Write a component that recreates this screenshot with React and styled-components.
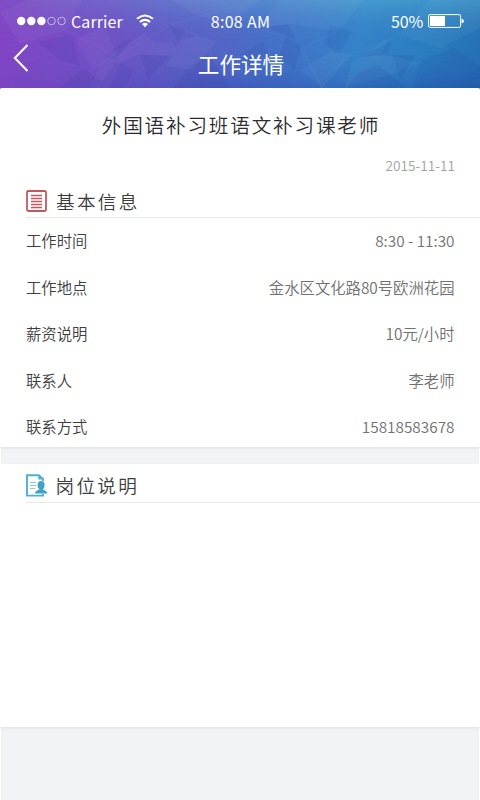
import React from 'react';
import styled, {createGlobalStyle} from 'styled-components'

const GlobalStyle = createGlobalStyle`
  * {
    box-sizing: border-box;
  }
  body {
    margin: 0;
    background: #fff;
    font-family: "Noto Sans CJK SC", "Noto Sans", sans-serif;
    font-weight: 350;
  }
`

const Page = styled.div`
  width: 480px;
  height: 800px;
  display: flex;
  flex-direction: column;
  overflow: hidden;
  background: linear-gradient(90deg, #7a45bd, #226eb5);
`

const Header = styled.header`
  position: relative;
  height: 88px;
  flex-shrink: 0;
  color: #fff;
  background: linear-gradient(97deg, #8244c4 0%, #7350c6 22%, #5a61c6 42%, #4670c8 56%, #3583c9 74%, #2a7ec0 88%, #2470b5 100%);
`

const Facets = styled.svg`
  position: absolute;
  top: 0;
  left: 0;
`

const StatusBar = styled.div`
  position: relative;
  height: 40px;
  padding: 1px 16px 0 17px;
  display: grid;
  grid-template-columns: 1fr auto 1fr;
  align-items: center;
  font-size: 16px;
  line-height: 24px;
  font-weight: 400;
`

const StatusGroup = styled.div`
  display: flex;
  align-items: center;
  justify-content: ${props => props.$end ? 'flex-end' : 'flex-start'};
`

const Carrier = styled.span`
  margin: 0 13px 0 5px;
  letter-spacing: 0.1px;
`

const Clock = styled.span`
  letter-spacing: 0.3px;
`

const Percent = styled.span`
  margin-right: 5px;
  letter-spacing: -0.2px;
`

const TitleBar = styled.div`
  position: relative;
  height: 48px;
  display: grid;
  grid-template-columns: 49px 1fr 47px;
  align-items: center;
`

const BackButton = styled.button`
  width: 40px;
  height: 40px;
  margin-top: -12px;
  padding: 0 0 0 12px;
  border: 0;
  background: none;
  color: #fff;
  display: flex;
  align-items: center;
`

const PageTitle = styled.h1`
  margin: 0;
  font-size: 21.6px;
  line-height: 48px;
  font-weight: 400;
  text-align: center;
`

const Body = styled.main`
  flex: 1;
  border: solid #fff;
  border-width: 0 1px;
  border-radius: 3px 3px 0 0;
  background: #f2f3f6;
`

const Card = styled.section`
  height: ${props => props.$height}px;
  margin: 0 -1px ${props => props.$gap || 0}px;
  border-radius: ${props => props.$rounded ? '2px 2px 0 0' : '0'};
  background: #fff;
  box-shadow: 0 1px 3px rgba(60, 60, 70, 0.1);
  overflow: hidden;
`

const JobName = styled.h2`
  margin: 21px 0 0;
  padding-left: 2px;
  font-size: 19.6px;
  line-height: 32px;
  font-weight: 350;
  letter-spacing: 1.82px;
  text-align: center;
  color: #2c2c2c;
`

const PostDate = styled.div`
  margin-top: 13px;
  padding-right: 25px;
  font-size: 13.7px;
  line-height: 22px;
  text-align: right;
  color: #a2a2a2;
`

const SectionHeader = styled.div`
  height: ${props => props.$height}px;
  margin-left: 26px;
  padding-top: ${props => props.$top}px;
  display: flex;
  align-items: flex-start;
  border-bottom: 1px solid #e8e8ea;
`

const SectionTitle = styled.h3`
  margin: 0 0 0 ${props => props.$gap}px;
  font-size: 18.6px;
  line-height: 22px;
  font-weight: 350;
  letter-spacing: 2.3px;
  color: #3c3c3c;
`

const InfoList = styled.dl`
  margin: 0;
  padding: 0.4px 25.5px 0 26px;
`

const InfoRow = styled.div`
  height: 46.4px;
  display: flex;
  justify-content: space-between;
  font-size: 15.35px;
  line-height: 45px;
`

const Label = styled.dt`
  color: #3e3e3e;
`

const Value = styled.dd`
  margin: 0;
  color: #707070;
`

const info = [
    {label: '工作时间', value: '8:30 - 11:30'},
    {label: '工作地点', value: '金水区文化路80号欧洲花园'},
    {label: '薪资说明', value: '10元/小时'},
    {label: '联系人', value: '李老师'},
    {label: '联系方式', value: '15818583678'},
]

function HeaderFacets() {
    return (
        <Facets width="480" height="88" viewBox="0 0 480 88">
            <defs>
                <linearGradient id="shade" x1="0" y1="0" x2="0" y2="1">
                    <stop offset="0" stopColor="#6cc8e0" stopOpacity=".32"/>
                    <stop offset=".5" stopColor="#4080c8" stopOpacity="0"/>
                    <stop offset="1" stopColor="#2030a0" stopOpacity=".26"/>
                </linearGradient>
                <linearGradient id="fade" x1="0" y1="0" x2="1" y2="0">
                    <stop offset="0" stopColor="#fff" stopOpacity=".2"/>
                    <stop offset=".5" stopColor="#fff"/>
                </linearGradient>
                <mask id="across">
                    <rect width="480" height="88" fill="url(#fade)"/>
                </mask>
            </defs>
            <rect width="480" height="88" fill="url(#shade)" mask="url(#across)"/>
            <g fill="#fff" opacity=".035">
                <path d="M0 12L28 0H82L66 30L20 44Z"/>
                <path d="M76 40L104 26L118 57L92 69Z"/>
                <path d="M112 58L144 34L160 46L120 62Z"/>
                <path d="M144 42H172L182 55H136Z"/>
                <path d="M90 88L104 56L120 62L110 88Z"/>
                <path d="M172 0H260L232 22L198 16Z"/>
                <path d="M186 30L216 42L192 70L166 66Z"/>
                <path d="M256 28L280 0H364L338 31L290 24Z"/>
                <path d="M345 88L352 62L388 38L382 54L420 63L392 74Z"/>
                <path d="M300 70L322 88L352 54L330 52Z"/>
                <path d="M400 35L430 0H480V28L440 48Z"/>
            </g>
            <g fill="#20318f" opacity=".09">
                <path d="M38 42L72 35L80 66L60 60Z"/>
                <path d="M82 69L104 82L96 88H60Z"/>
                <path d="M140 54L168 57L148 79Z"/>
                <path d="M140 54L168 57L148 79Z"/>
                <path d="M104 57L120 43L132 39L117 59Z"/>
                <path d="M116 62L134 70L125 88H98Z"/>
                <path d="M168 24L196 36L178 41Z"/>
                <path d="M186 70L208 54L230 88H174Z"/>
                <path d="M240 54L263 42L268 54L248 66Z"/>
                <path d="M268 27L288 24L296 40Z"/>
                <path d="M330 25L352 31L340 53L324 45Z"/>
                <path d="M359 57L392 41L387 55Z"/>
                <path d="M392 55L416 55L400 79Z"/>
                <path d="M392 55L416 55L400 79Z"/>
                <path d="M422 60L454 48L480 66V88H412Z"/>
                <path d="M288 32L302 48L294 70L278 57Z"/>
                <path d="M360 72L378 65L406 88H346Z"/>
            </g>
            <g stroke="#a8d5f5" strokeWidth="1" opacity=".06" fill="none">
                <path d="M66 30L118 57L172 24L260 0M88 72L144 34"/>
                <path d="M256 28L296 40L318 82L352 54L400 35L430 0M338 31L302 48L322 88"/>
            </g>
        </Facets>
    );
}

function SignalDots() {
    return (
        <svg width="49" height="10" viewBox="0 0 49 10">
            <g fill="#fff">
                <circle cx="4.2" cy="5" r="4.2"/>
                <circle cx="14.3" cy="5" r="4.2"/>
                <circle cx="24.4" cy="5" r="4.2"/>
            </g>
            <g fill="none" stroke="#fff" strokeWidth=".8" opacity=".7">
                <circle cx="34.5" cy="5" r="3.8"/>
                <circle cx="44.6" cy="5" r="3.8"/>
            </g>
        </svg>
    );
}

function WifiIcon() {
    return (
        <svg width="18" height="14" viewBox="0 0 18 14">
            <g fill="none" stroke="#fff" strokeWidth="2.1">
                <path d="M1 4.8Q9 -1.8 17 4.8"/>
                <path d="M3.9 8Q9 3.6 14.1 8"/>
            </g>
            <path d="M6 10.1Q9 7.4 12 10.1L9 13.3Z" fill="#fff"/>
        </svg>
    );
}

function BatteryIcon() {
    return (
        <svg width="36" height="14" viewBox="0 0 36 14">
            <rect x=".6" y=".6" width="32" height="12.8" rx="1.5" fill="none" stroke="#fff" strokeWidth="1"/>
            <rect x="2" y="2" width="15" height="10" fill="#fff"/>
            <path d="M33.6 4.5Q36 5.5 36 7Q36 8.5 33.6 9.5Z" fill="#fff"/>
        </svg>
    );
}

function ListIcon() {
    return (
        <svg width="21" height="22" viewBox="0 0 21 22" fill="none" stroke="#c4585e">
            <rect x="1" y="1" width="19" height="20" rx="1.2" strokeWidth="1.8"/>
            <path d="M5 5.5H16M5 8.5H16M5 11.5H16M5 14.5H16M5 17.5H16" strokeWidth="1.4"/>
        </svg>
    );
}

function ProfileIcon() {
    return (
        <svg width="22" height="23" viewBox="0 0 22 23">
            <path d="M17 7V5L12.8 1.2H1V21.6H17V20" fill="none" stroke="#4fb0cb" strokeWidth="1.9"/>
            <path d="M12.3 1V5.6H17Z" fill="#4fb0cb"/>
            <path d="M4 8.5H10M4 11.5H10M4 14.5H9" stroke="#8cc5d5" strokeWidth="1"/>
            <ellipse cx="15.1" cy="11.2" rx="3.5" ry="4.2" fill="#3ea4c4"/>
            <path d="M8.8 19.5Q9.2 16.7 13.4 15.8V14H16.8V15.8Q21 16.7 21.4 19.5Z" fill="#3ea4c4"/>
        </svg>
    );
}

function App() {
    return (
        <Page>
            <GlobalStyle/>
            <Header>
                <HeaderFacets/>
                <StatusBar>
                    <StatusGroup>
                        <SignalDots/>
                        <Carrier>Carrier</Carrier>
                        <WifiIcon/>
                    </StatusGroup>
                    <Clock>8:08 AM</Clock>
                    <StatusGroup $end>
                        <Percent>50%</Percent>
                        <BatteryIcon/>
                    </StatusGroup>
                </StatusBar>
                <TitleBar>
                    <BackButton aria-label="返回">
                        <svg width="17" height="28" viewBox="0 0 17 28" fill="none" stroke="currentColor" strokeWidth="2">
                            <path d="M15.5 1L2.8 14L15.5 27"/>
                        </svg>
                    </BackButton>
                    <PageTitle>工作详情</PageTitle>
                </TitleBar>
            </Header>
            <Body>
                <Card $height={359} $gap={17} $rounded>
                    <JobName>外国语补习班语文补习课老师</JobName>
                    <PostDate>2015-11-11</PostDate>
                    <SectionHeader $height={42} $top={14}>
                        <ListIcon/>
                        <SectionTitle $gap={9}>基本信息</SectionTitle>
                    </SectionHeader>
                    <InfoList>
                        {info.map(item => (
                            <InfoRow key={item.label}>
                                <Label>{item.label}</Label>
                                <Value>{item.value}</Value>
                            </InfoRow>
                        ))}
                    </InfoList>
                </Card>
                <Card $height={263}>
                    <SectionHeader $height={39} $top={10}>
                        <ProfileIcon/>
                        <SectionTitle $gap={7.5}>岗位说明</SectionTitle>
                    </SectionHeader>
                </Card>
            </Body>
        </Page>
    );
}

export default App;
